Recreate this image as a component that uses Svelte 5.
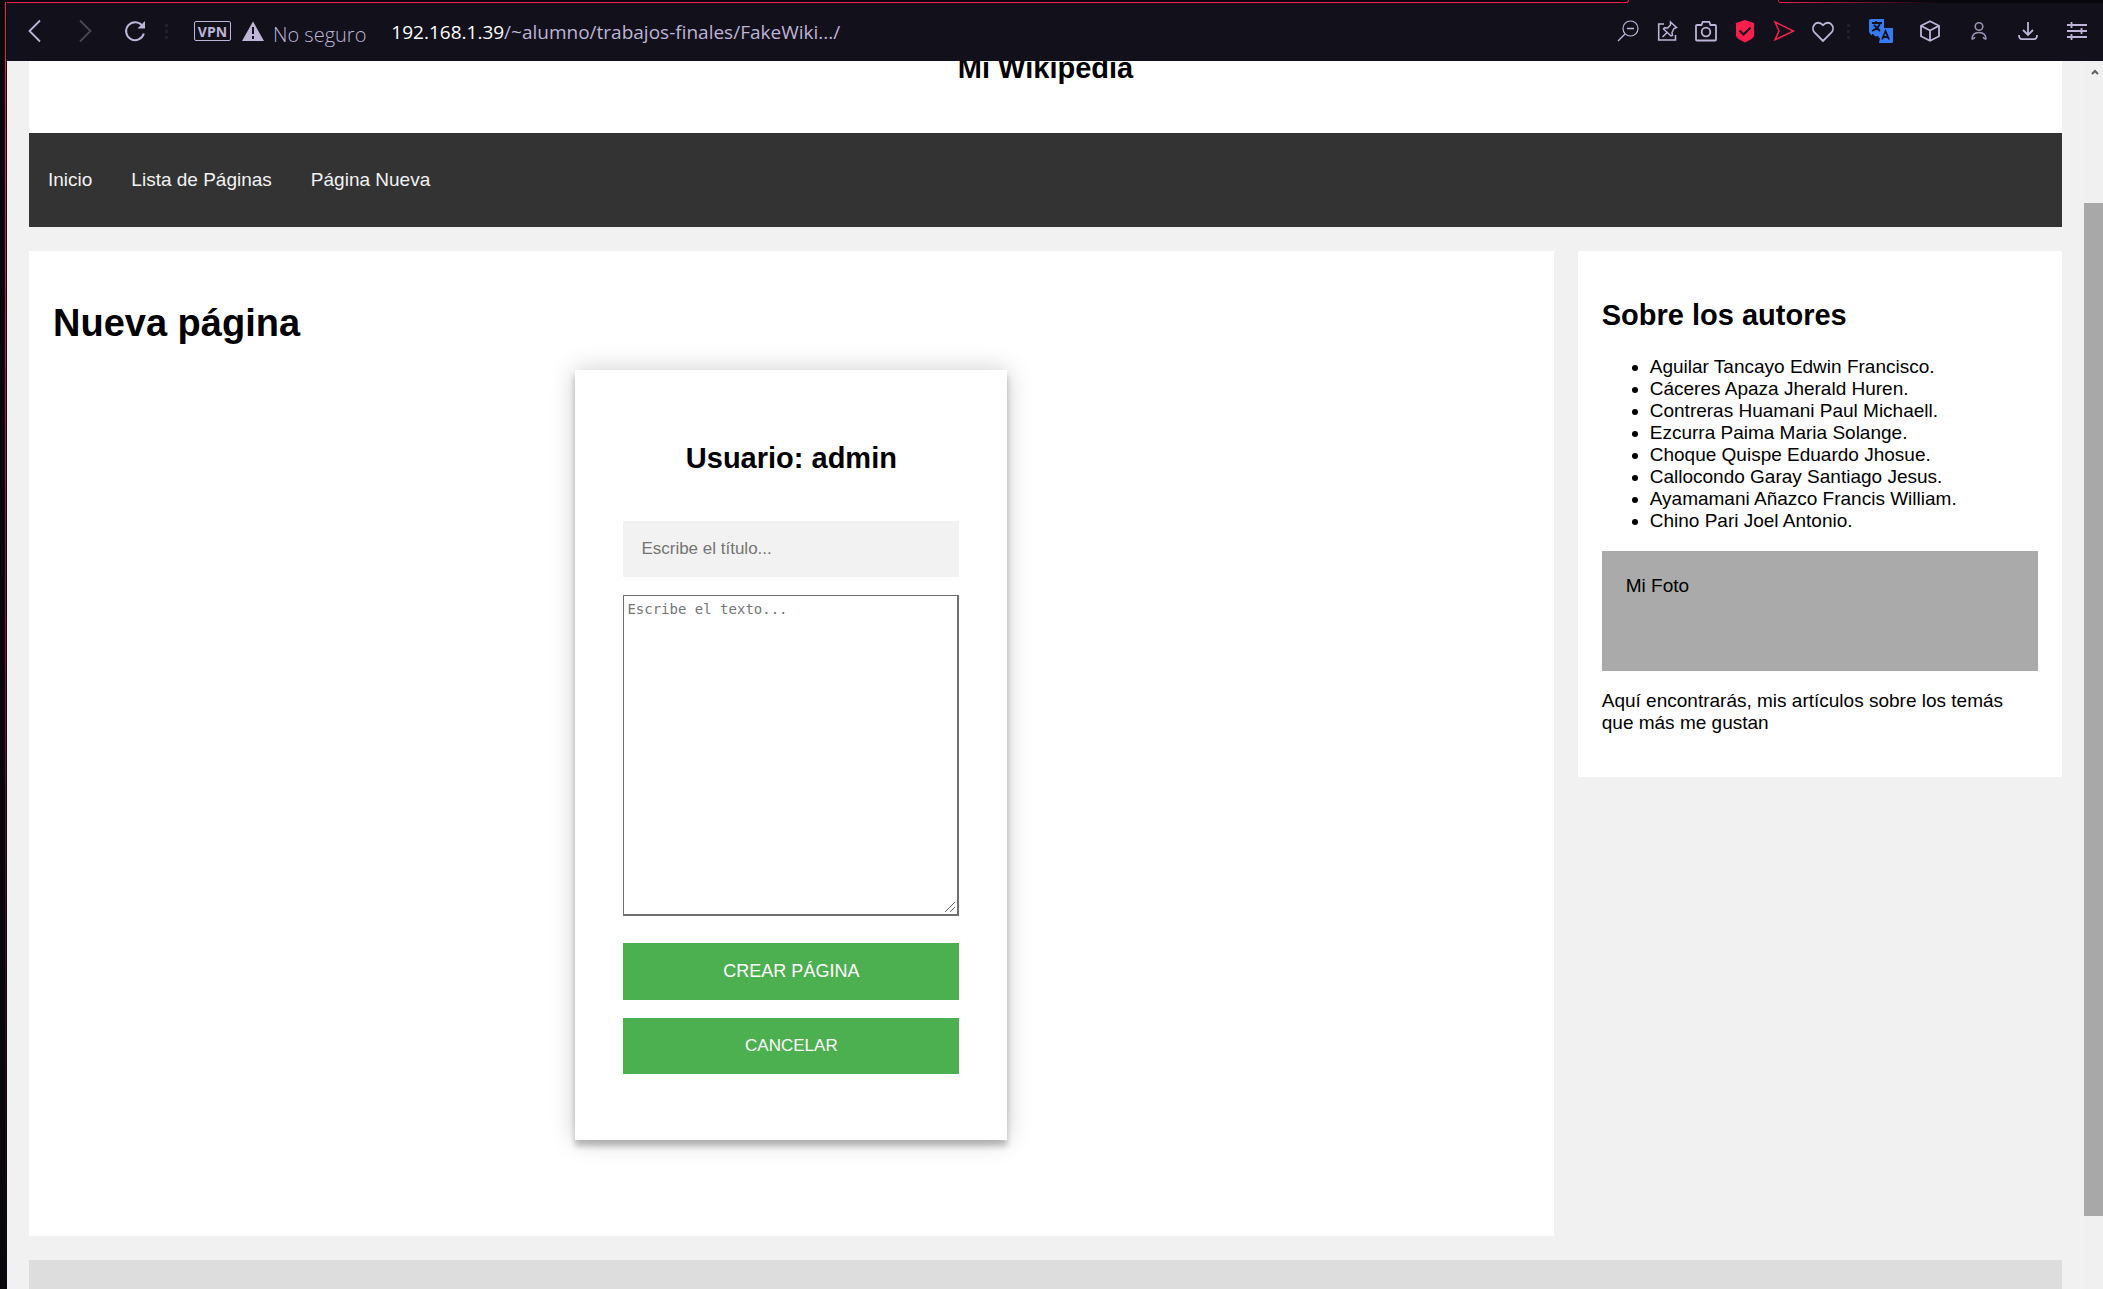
<script>
  const navLinks = ['Inicio', 'Lista de Páginas', 'Página Nueva'];
  const authors = [
    'Aguilar Tancayo Edwin Francisco.',
    'Cáceres Apaza Jherald Huren.',
    'Contreras Huamani Paul Michaell.',
    'Ezcurra Paima Maria Solange.',
    'Choque Quispe Eduardo Jhosue.',
    'Callocondo Garay Santiago Jesus.',
    'Ayamamani Añazco Francis William.',
    'Chino Pari Joel Antonio.'
  ];
  let title = $state('');
  let text = $state('');
</script>

<div class="window">
  <div class="edge"></div>
  <div class="frame">
    <div class="tabs">
      <div class="tabs-before"></div>
      <div class="tab-active"></div>
      <div class="tabs-after"></div>
    </div>

    <div class="toolbar">
      <div class="history">
        <button aria-label="Atrás"><svg viewBox="0 0 24 24"><path d="M17 1.500 6.500 12 17 22.500" stroke-width="1.800" /></svg></button>
        <button aria-label="Adelante" class="dim"><svg viewBox="0 0 24 24"><path d="M7 1.500 17.500 12 7 22.500" stroke-width="1.800" /></svg></button>
        <button aria-label="Recargar"><svg viewBox="0 0 24 24"><path d="M19.500 7A9 9 0 1 0 20.800 14.500" stroke-width="2" /><path class="solid" d="M22 2v7.500h-7.500z" /></svg></button>
      </div>
      <span class="dots"></span>
      <button class="vpn">VPN</button>
      <button class="security">
        <svg viewBox="0 0 24 24"><path class="solid" d="M12 2.500 23 22H1z" /><path d="M12 8v7M12 17v3" stroke="#12101a" stroke-width="2" /></svg>
        <span>No seguro</span>
      </button>
      <div class="url"><b>192.168.1.39</b>/~alumno/trabajos-finales/FakeWiki.../</div>

      <div class="page-tools">
        <button aria-label="Alejar"><svg viewBox="0 0 24 24"><circle cx="14.500" cy="9.500" r="7.500" stroke-width="1.200" /><path d="M11 9.500h7M9 15l-7 7" stroke-width="1.400" /></svg></button>
        <button aria-label="Fijar"><svg viewBox="0 0 24 24"><path d="M9 5H3.700v16H20.500V16" stroke-width="1.600" /><path d="m15.500 3 6 5.500-2.500 1-2 4 .5 3-1.500.500-7.500-7 1-1.200 3.200.2 2.800-3zM12 13.500l-4.500 4.500" stroke-width="1.500" /></svg></button>
        <button aria-label="Captura"><svg viewBox="0 0 24 24"><path d="M3 6h4.500l1.200-3.200h6.600L16.500 6H21a1 1 0 0 1 1 1v13.500a1 1 0 0 1-1 1H3a1 1 0 0 1-1-1V7a1 1 0 0 1 1-1z" stroke-width="1.800" /><circle cx="12" cy="13" r="4.300" stroke-width="1.800" /></svg></button>
        <button aria-label="Bloqueador" class="red"><svg viewBox="0 0 24 24"><path class="solid" d="m12 1 9 3v12.500q0 3-9 7-9-4-9-7V4z" /><path d="m6.500 11.500 4 4 7-7" stroke="#12101a" stroke-width="2" /></svg></button>
        <button aria-label="Enviar" class="red"><svg viewBox="0 0 24 24"><path d="m3 3 18.500 9L3 20.800 7 12z" stroke-width="1.500" /></svg></button>
        <button aria-label="Favorito"><svg viewBox="0 0 24 24"><path d="M12 22 3.500 13.500C-1 8 5.500-.500 12 6.200 18.500-.500 25 8 20.500 13.500z" stroke-width="1.800" /></svg></button>
      </div>
      <span class="dots right"></span>
      <div class="extensions">
        <button aria-label="Traducir">
          <svg viewBox="0 0 24 24"><path d="M0 1.500Q0 0 1.500 0H15v9h9v13.500q0 1.500-1.500 1.500H10l1-5-9-3L0 13z" fill="#367cf0" stroke="none" /><path d="M3 4h10M7 2v2M11 4q-1 5-8 8M5 6l6 6M3 15.500 8.500 21V17M13 20.500 16.500 12 20 20.500M14 18h5" stroke="#12101a" stroke-width="1.800" /></svg>
        </button>
        <button aria-label="Cubo"><svg viewBox="0 0 24 24"><path d="m12 2.200 9 4.500v10.600l-9 4.500-9-4.500V6.700zM3 6.700l9 4.800 9-4.800M12 11.500v10.300" stroke-width="1.800" /></svg></button>
        <button aria-label="Perfil" class="soft"><svg viewBox="0 0 24 24"><circle cx="12" cy="7.500" r="3.800" stroke-width="1.600" /><path d="M5 20.500c0-4 2-7 7-7s7 3 7 7M5 20.300c1.800 0 2.300-.800 2.800-2.300M19 20.300c-1.800 0-2.300-.800-2.800-2.300" stroke-width="1.600" /></svg></button>
        <button aria-label="Descargas"><svg viewBox="0 0 24 24"><path d="M12 3v12.500M7 11l5 5 5-5M3 16q0 4.200 3 4.200h12q3 0 3-4.200" stroke-width="1.800" /></svg></button>
        <button aria-label="Configuración"><svg viewBox="0 0 24 24"><path d="M2 6h20M2 12h20M2 18h20M6.500 3v6M16.500 9v6M6.500 15v6" stroke-width="1.800" /></svg></button>
      </div>
    </div>

    <div class="viewport">
      <div class="page">
        <header><h2>Mi Wikipedia</h2></header>
        <nav>
          {#each navLinks as link}
            <a href="#top">{link}</a>
          {/each}
        </nav>

        <div class="columns">
          <main class="card">
            <h1>Nueva página</h1>
            <form onsubmit={(e) => e.preventDefault()}>
              <h2>Usuario: admin</h2>
              <input type="text" aria-label="Título" placeholder="Escribe el título..." bind:value={title} />
              <textarea aria-label="Texto" placeholder="Escribe el texto..." bind:value={text}></textarea>
              <button class="create">CREAR PÁGINA</button>
              <button type="button">CANCELAR</button>
            </form>
          </main>

          <aside class="card">
            <h2>Sobre los autores</h2>
            <ul>
              {#each authors as author}
                <li>{author}</li>
              {/each}
            </ul>
            <div class="photo">Mi Foto</div>
            <p>Aquí encontrarás, mis artículos sobre los temás que más me gustan</p>
          </aside>
        </div>

        <footer></footer>
      </div>

      <div class="scrollbar">
        <svg viewBox="0 0 20 22"><path d="m8 13 3-3 3 3" /></svg>
        <div class="thumb"></div>
      </div>
    </div>
  </div>
</div>

<style>
  :global(body) {
    margin: 0;
    font-family: "Liberation Sans", Arial, sans-serif;
    font-size: 19px;
    line-height: 22px;
    color: #000;
  }
  * { box-sizing: border-box; }
  .window {
    display: flex;
    height: 100vh;
    overflow: hidden;
    background: #08070d;
  }
  .edge {
    width: 7px;
    flex: none;
    margin-top: 2px;
    background: linear-gradient(#fa1e4e, #08070d) 5px 0 / 1px 100% no-repeat;
  }
  .frame {
    flex: 1;
    min-width: 0;
    display: flex;
    flex-direction: column;
  }
  .tabs {
    display: flex;
    height: 3px;
    flex: none;
    background: #12101a;
  }
  .tabs-before {
    flex: 1;
    background: #08070d;
    border: solid #fa1e4e;
    border-width: 0 1px 1px 0;
    border-bottom-right-radius: 3px;
  }
  .tab-active { width: 149px; }
  .tabs-after {
    width: 325px;
    background: linear-gradient(90deg, #fa1e4e, #08070d 160px) 0 100% / 100% 1px no-repeat #08070d;
    border-left: 1px solid #fa1e4e;
    border-bottom-left-radius: 3px;
  }

  .toolbar {
    display: flex;
    align-items: center;
    flex: none;
    height: 58px;
    padding: 0 14px 2px 16px;
    background: #12101a;
    color: #beb4d7;
    font-family: "Segoe UI", "Open Sans", sans-serif;
  }
  .toolbar button {
    display: flex;
    align-items: center;
    padding: 0;
    border: 0;
    background: none;
    color: inherit;
    font-family: inherit;
  }
  .toolbar svg {
    display: block;
    width: 24px;
    height: 24px;
    fill: none;
    stroke: currentColor;
  }
  .toolbar .solid { fill: currentColor; stroke: none; }
  .toolbar .dim { color: #4c4757; }
  .toolbar .soft { color: #9a91b0; }
  .toolbar .red { color: #fa1e4e; }
  .history { display: flex; gap: 26px; }
  .dots {
    width: 3px;
    height: 15px;
    margin: 0 26px 0 18px;
    background: repeating-linear-gradient(#221f30 0 3px, transparent 3px 6px);
  }
  .dots.right { margin: 0 19px 0 12px; }
  .toolbar .vpn {
    justify-content: center;
    width: 37px;
    height: 20px;
    border: 1px solid #beb4d7;
    border-radius: 2px;
    font-size: 14px;
    font-weight: 700;
  }
  .toolbar .security {
    gap: 8px;
    margin-left: 10px;
    font-size: 20px;
    font-weight: 300;
  }
  .security span { padding-top: 6px; }
  .url {
    flex: 1;
    min-width: 0;
    margin-left: 25px;
    padding-top: 2px;
    font-size: 19px;
    white-space: nowrap;
  }
  .url b { color: #fff; font-weight: 400; }
  .page-tools { display: flex; gap: 15px; }
  .extensions { display: flex; gap: 25px; }

  .viewport {
    display: flex;
    flex: 1;
    min-height: 0;
    overflow: hidden;
    background: #f1f1f1;
  }
  .page {
    flex: 1;
    min-width: 0;
    padding: 0 22px;
  }
  h1, h2, p, ul { margin: 0; }
  h1 { font-size: 38px; line-height: 44px; }
  h2 { font-size: 29px; line-height: 34px; }
  header {
    height: 72px;
    overflow: hidden;
    background: #fff;
    text-align: center;
  }
  header h2 { margin-top: -10px; }
  nav {
    display: flex;
    gap: 1px;
    height: 94px;
    background: #333;
  }
  nav a {
    padding: 36px 19px;
    color: #f2f2f2;
    text-decoration: none;
  }
  .columns {
    display: grid;
    grid-template-columns: 3fr 1fr;
    align-items: start;
    margin-top: 24px;
  }
  .card { padding: 24px; background: #fff; }
  main { min-height: 985px; }
  main h1 { margin-top: 26px; }
  form {
    display: flex;
    flex-direction: column;
    width: 432px;
    margin: 25px auto 0;
    padding: 48px 48px 66px;
    background: #fff;
    box-shadow: 0 0 24px rgba(0, 0, 0, 0.2), 0 6px 6px rgba(0, 0, 0, 0.24);
  }
  form h2 { margin: 23px 0 46px; text-align: center; }
  form input {
    height: 56px;
    margin-bottom: 18px;
    padding: 0 18px;
    border: 0;
    background: #f2f2f2;
    font: 17px "Liberation Sans", Arial, sans-serif;
  }
  ::placeholder { color: #757575; }
  form textarea {
    height: 321px;
    margin-bottom: 27px;
    padding: 5px 3px;
    border: solid #707070;
    border-width: 1px 2px 2px 1px;
    font: 14px "DejaVu Sans Mono", monospace;
    resize: both;
  }
  form textarea::-webkit-resizer {
    background: linear-gradient(135deg, transparent 47%, #606060 47% 54%, transparent 54% 72%, #606060 72% 79%, transparent 79%) 3px 3px / 10px 10px no-repeat;
  }
  form button {
    height: 56px;
    border: 0;
    background: #4caf50;
    color: #fff;
    font: 17px "Liberation Sans", Arial, sans-serif;
  }
  form .create { height: 57px; margin-bottom: 18px; font-size: 18px; }

  aside { margin-left: 24px; }
  aside h2 { margin: 23px 0 24px; }
  ul { padding-left: 48px; }
  .photo {
    height: 120px;
    margin: 19px 0;
    padding: 24px;
    background: #aaa;
  }
  aside p { padding-bottom: 19px; }
  footer {
    height: 96px;
    margin-top: 24px;
    background: #ddd;
  }
  .scrollbar {
    width: 19px;
    flex: none;
    background: #f0f0f0;
  }
  .scrollbar svg {
    display: block;
    width: 20px;
    height: 22px;
    fill: none;
    stroke: #606060;
    stroke-width: 2;
  }
  .thumb {
    height: 84%;
    max-height: 1013px;
    margin-top: 120px;
    background: #a8a8a8;
  }
</style>
